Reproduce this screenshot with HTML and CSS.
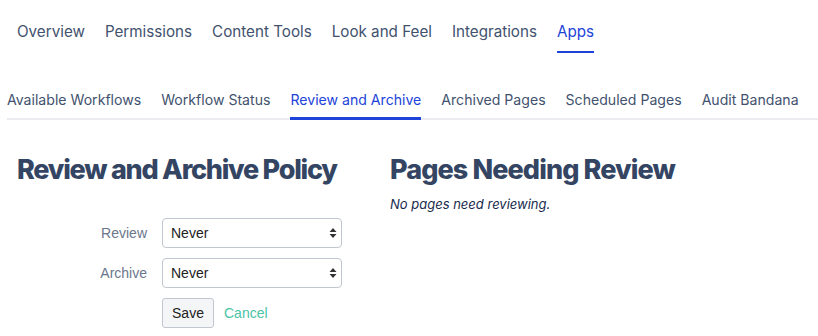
FILE: index.html
```html
<!DOCTYPE html>
<html lang="en">
<head>
  <meta charset="UTF-8" />
  <title>Review and Archive</title>
  <link rel="stylesheet" href="styles.css">
</head>
<body>
  <nav class="topnav">
    <a>Overview</a>
    <a>Permissions</a>
    <a>Content Tools</a>
    <a>Look and Feel</a>
    <a>Integrations</a>
    <a class="ativo">Apps</a>
  </nav>

  <nav class="subnav">
    <a>Available Workflows</a>
    <a>Workflow Status</a>
    <a class="ativo">Review and Archive</a>
    <a>Archived Pages</a>
    <a>Scheduled Pages</a>
    <a>Audit Bandana</a>
  </nav>

  <div class="main">
    <div class="policy">
      <h1>Review and Archive Policy</h1>
      <form class="policy-form">
        <label>Review</label>
        <div class="select">
          <span>Never</span>
          <svg class="arrows" width="8" height="12" viewBox="0 0 8 12">
            <path d="M4 1 L7.5 5 H0.5 Z" fill="#333"/>
            <path d="M4 11 L7.5 7 H0.5 Z" fill="#333"/>
          </svg>
        </div>

        <label>Archive</label>
        <div class="select">
          <span>Never</span>
          <svg class="arrows" width="8" height="12" viewBox="0 0 8 12">
            <path d="M4 1 L7.5 5 H0.5 Z" fill="#333"/>
            <path d="M4 11 L7.5 7 H0.5 Z" fill="#333"/>
          </svg>
        </div>

        <div></div>
        <div class="acoes">
          <button type="button">Save</button>
          <a class="cancel">Cancel</a>
        </div>
      </form>
    </div>

    <div class="review">
      <h1>Pages Needing Review</h1>
      <p>No pages need reviewing.</p>
    </div>
  </div>
</body>
</html>
```

FILE: styles.css
```css
* {
  margin: 0;
  padding: 0;
  box-sizing: border-box;
}

body {
  background-color: #ffffff;
  color: #172b4d;
  font-family: Inter, 'Noto Sans', sans-serif;
}

.topnav {
  display: flex;
  gap: 20px;
  padding-left: 17px;
}

.topnav a {
  font-size: 15.2px;
  line-height: 24px;
  padding: 20px 0 7px;
  color: #42526e;
  border-bottom: 2px solid transparent;
}

.topnav a.ativo {
  color: #1d43d8;
  border-bottom-color: #1d43d8;
}

.subnav {
  display: flex;
  gap: 20px;
  margin: 37px 0 0 7px;
  border-bottom: 2px solid #ebecf0;
}

.subnav a {
  font-size: 14.1px;
  line-height: 20px;
  padding-bottom: 7px;
  margin-bottom: -2px;
  color: #42526e;
  border-bottom: 3px solid transparent;
}

.subnav a.ativo {
  color: #1d43d8;
  border-bottom-color: #1d43d8;
}

.main {
  display: grid;
  grid-template-columns: 373px 1fr;
  padding: 34px 0 0 17px;
}

.main h1 {
  font-size: 27px;
  line-height: 32px;
  font-weight: 800;
  letter-spacing: -1.25px;
  color: #344563;
}

.review h1 {
  letter-spacing: -0.9px;
}

.review p {
  margin-top: 9px;
  font-size: 13px;
  line-height: 18px;
  font-style: italic;
  color: #172b4d;
}

.policy-form {
  display: grid;
  grid-template-columns: 130px 180px;
  column-gap: 15px;
  row-gap: 10px;
  margin-top: 32px;
  align-items: center;
  font-family: 'Liberation Sans', Arial, sans-serif;
  font-size: 14px;
}

.policy-form label {
  text-align: right;
  color: #6b778c;
}

.select {
  position: relative;
  height: 30px;
  border: 1px solid #c1c7d0;
  border-radius: 4px;
  background-color: #ffffff;
  display: flex;
  align-items: center;
  padding-left: 8px;
  color: #222222;
}

.select .arrows {
  position: absolute;
  right: 4px;
  top: 8px;
}

.acoes {
  display: flex;
  align-items: center;
  gap: 10px;
}

.acoes button {
  width: 52px;
  height: 30px;
  font-family: 'Liberation Sans', Arial, sans-serif;
  font-size: 14px;
  color: #222222;
  background-color: #f4f5f7;
  border: 1px solid #c1c7d0;
  border-radius: 3px;
}

.cancel {
  color: #4bc3a5;
}
```
